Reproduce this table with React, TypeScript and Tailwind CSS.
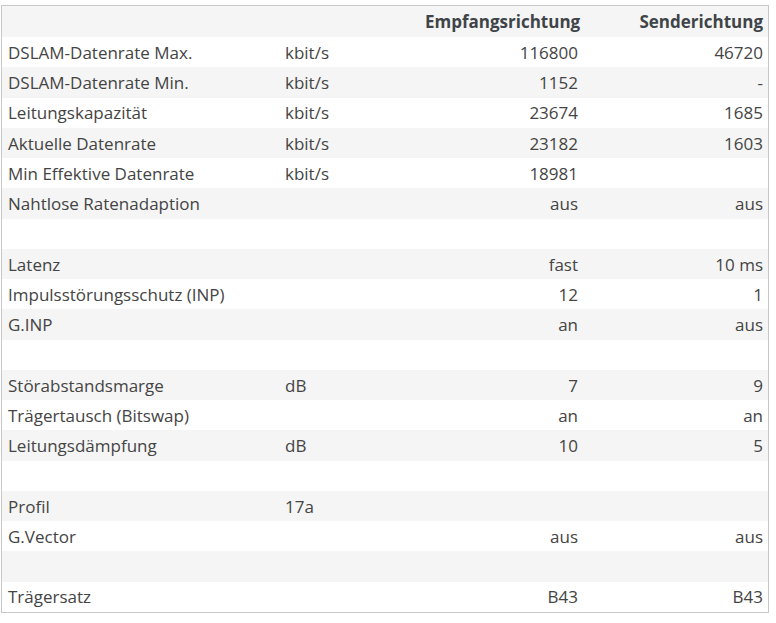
import React from "react";

type Row = { label: string; unit: string; down: string; up: string };

const rows: Row[] = [
  { label: "DSLAM-Datenrate Max.", unit: "kbit/s", down: "116800", up: "46720" },
  { label: "DSLAM-Datenrate Min.", unit: "kbit/s", down: "1152", up: "-" },
  { label: "Leitungskapazität", unit: "kbit/s", down: "23674", up: "1685" },
  { label: "Aktuelle Datenrate", unit: "kbit/s", down: "23182", up: "1603" },
  { label: "Min Effektive Datenrate", unit: "kbit/s", down: "18981", up: "" },
  { label: "Nahtlose Ratenadaption", unit: "", down: "aus", up: "aus" },
  { label: "", unit: "", down: "", up: "" },
  { label: "Latenz", unit: "", down: "fast", up: "10 ms" },
  { label: "Impulsstörungsschutz (INP)", unit: "", down: "12", up: "1" },
  { label: "G.INP", unit: "", down: "an", up: "aus" },
  { label: "", unit: "", down: "", up: "" },
  { label: "Störabstandsmarge", unit: "dB", down: "7", up: "9" },
  { label: "Trägertausch (Bitswap)", unit: "", down: "an", up: "an" },
  { label: "Leitungsdämpfung", unit: "dB", down: "10", up: "5" },
  { label: "", unit: "", down: "", up: "" },
  { label: "Profil", unit: "17a", down: "", up: "" },
  { label: "G.Vector", unit: "", down: "aus", up: "aus" },
  { label: "", unit: "", down: "", up: "" },
  { label: "Trägersatz", unit: "", down: "B43", up: "B43" },
];

export default function App() {
  return (
    <div className="bg-white w-[776px] h-[623px] pt-[5px] pl-[1px] font-['Open_Sans',sans-serif] text-[17px] text-[#444444]">
      <div className="w-[768px] border border-[#c8c8c8]">
        <div className="grid grid-cols-[278px_140px_163px_185px] h-[31px] items-center bg-[#f5f5f5] font-bold text-[#3f4448]">
          <div className="px-[6px]"></div>
          <div className="px-[5px]"></div>
          <div className="px-[5px] text-right">Empfangsrichtung</div>
          <div className="px-[5px] text-right">Senderichtung</div>
        </div>
        {rows.map((r, i) => (
          <div
            key={i}
            className={`grid grid-cols-[278px_140px_163px_185px] h-[30.25px] items-center pt-[1px] ${
              i % 2 === 1 ? "bg-[#f5f5f5]" : "bg-white"
            }`}
          >
            <div className="px-[6px] whitespace-nowrap">{r.label}</div>
            <div className="px-[5px] whitespace-nowrap">{r.unit}</div>
            <div className="px-[5px] text-right">{r.down}</div>
            <div className="px-[5px] text-right">{r.up}</div>
          </div>
        ))}
      </div>
    </div>
  );
}
